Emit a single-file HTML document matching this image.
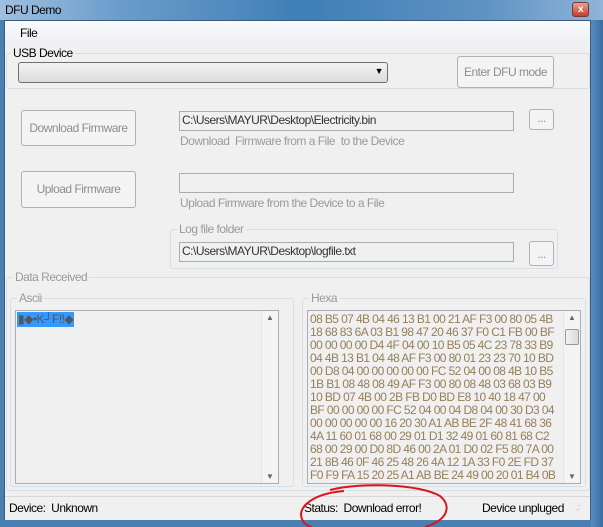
<!DOCTYPE html>
<html><head><style>
*{margin:0;padding:0;box-sizing:border-box}
body{width:603px;height:527px;position:relative;overflow:hidden;font-family:"Liberation Sans",sans-serif;font-size:12px;letter-spacing:-0.5px;background:#6d9cc8}
.a{position:absolute}
#title{left:0;top:0;width:603px;height:20px;background:linear-gradient(90deg,#9fc0de 0%,#6a9ccb 20%,#3f7fb6 50%,#5e92c3 80%,#8fb4d8 100%)}
#client{left:4px;top:20px;width:587px;height:501px;background:#f0f0f0;border:1px solid #3c5b7c}
.gb{position:absolute;border:1px solid #d5dfe5;border-radius:3px}
.gl{position:absolute;background:#f0f0f0;padding:0 2px;color:#9a9a9a;font-size:12px;top:-8px;left:6px}
.btn{position:absolute;border:1px solid #adb2b5;border-radius:3px;background:#f4f4f4;color:#8d8d8d;text-align:center}
.tb{position:absolute;border:1px solid #abadb3;background:#f0f0f0;color:#333;padding-left:2px;line-height:17px}
.lab{position:absolute;color:#9a9a9a}
</style></head><body>
<div id="title" class="a"><span class="a" style="left:5px;top:3px;color:#000">DFU Demo</span>
<div class="a" style="left:572px;top:2px;width:17px;height:15px;background:linear-gradient(#e8a090,#c2402a);border:1px solid #7a3a30;border-radius:3px;color:#fff;font-size:10px;text-align:center;line-height:13px;font-weight:bold">x</div></div>
<div class="a" style="left:0;top:20px;width:4px;height:507px;background:#4a7fb2"></div>
<div id="client" class="a"></div>
<div class="a" style="left:5px;top:21px;width:585px;height:23px;background:linear-gradient(#f9fafc,#eef0f4)"></div>
<span class="a" style="left:20px;top:26px;color:#000">File</span>
<div class="gb" style="left:6px;top:53px;width:584px;height:36px"><span class="gl" style="left:4px;color:#000">USB Device</span></div>
<div class="a" style="left:18px;top:62px;width:370px;height:21px;border:1px solid #707070;border-radius:3px;background:linear-gradient(#f2f2f2,#dcdcdc)"><span class="a" style="right:4px;top:3px;font-size:9px">▼</span></div>
<div class="btn" style="left:457px;top:56px;width:97px;height:32px;line-height:30px">Enter DFU mode</div>
<div class="btn" style="left:21px;top:110px;width:115px;height:36px;line-height:34px">Download Firmware</div>
<div class="tb" style="left:179px;top:111px;width:335px;height:20px">C:\Users\MAYUR\Desktop\Electricity.bin</div>
<div class="btn" style="left:529px;top:109px;width:25px;height:21px;line-height:17px">...</div>
<span class="lab" style="left:180px;top:134px">Download&nbsp; Firmware from a File&nbsp; to the Device</span>
<div class="btn" style="left:21px;top:171px;width:115px;height:37px;line-height:35px">Upload Firmware</div>
<div class="tb" style="left:179px;top:173px;width:335px;height:20px"></div>
<span class="lab" style="left:180px;top:196px">Upload Firmware from the Device to a File</span>
<div class="gb" style="left:170px;top:229px;width:388px;height:40px"><span class="gl">Log file folder</span></div>
<div class="tb" style="left:179px;top:242px;width:335px;height:20px">C:\Users\MAYUR\Desktop\logfile.txt</div>
<div class="btn" style="left:529px;top:241px;width:25px;height:25px;line-height:25px">...</div>
<div class="gb" style="left:6px;top:277px;width:584px;height:214px"><span class="gl">Data Received</span></div>
<div class="gb" style="left:10px;top:298px;width:284px;height:189px;background:#f0f0f0"><span class="gl">Ascii</span></div>
<div class="a" style="left:15px;top:310px;width:264px;height:174px;border:1px solid #abadb3;background:#f0f0f0">
<span class="a" style="left:1px;top:1px;background:#3399ff;color:#555;font-size:12px;line-height:15px;padding:0 1px">▮◆•K┘F‼◆</span>
<div class="a" style="right:0;top:0;width:17px;height:172px;background:#f4f4f4;border-left:1px solid #e6e6e6"><span class="a" style="left:4px;top:2px;font-size:8px;color:#666">▲</span><span class="a" style="left:4px;bottom:2px;font-size:8px;color:#666">▼</span></div></div>
<div class="gb" style="left:302px;top:298px;width:284px;height:189px;background:#f0f0f0"><span class="gl">Hexa</span></div>
<div class="a" style="left:307px;top:310px;width:274px;height:174px;border:1px solid #abadb3;background:#f0f0f0;overflow:hidden">
<div class="a" style="left:2px;top:2px;width:252px;color:#96805a;line-height:13px;font-size:12px;letter-spacing:-0.6px;white-space:pre">08 B5 07 4B 04 46 13 B1 00 21 AF F3 00 80 05 4B
18 68 83 6A 03 B1 98 47 20 46 37 F0 C1 FB 00 BF
00 00 00 00 D4 4F 04 00 10 B5 05 4C 23 78 33 B9
04 4B 13 B1 04 48 AF F3 00 80 01 23 23 70 10 BD
00 D8 04 00 00 00 00 00 FC 52 04 00 08 4B 10 B5
1B B1 08 48 08 49 AF F3 00 80 08 48 03 68 03 B9
10 BD 07 4B 00 2B FB D0 BD E8 10 40 18 47 00
BF 00 00 00 00 FC 52 04 00 04 D8 04 00 30 D3 04
00 00 00 00 00 16 20 30 A1 AB BE 2F 48 41 68 36
4A 11 60 01 68 00 29 01 D1 32 49 01 60 81 68 C2
68 00 29 00 D0 8D 46 00 2A 01 D0 02 F5 80 7A 00
21 8B 46 0F 46 25 48 26 4A 12 1A 33 F0 2E FD 37
F0 F9 FA 15 20 25 A1 AB BE 24 49 00 20 01 B4 0B</div>
<div class="a" style="right:0;top:0;width:17px;height:172px;background:#f4f4f4;border-left:1px solid #e6e6e6"><span class="a" style="left:4px;top:2px;font-size:8px;color:#666">▲</span><div class="a" style="left:1px;top:18px;width:14px;height:16px;border:1px solid #999;border-radius:2px;background:linear-gradient(90deg,#f2f2f2,#dcdcdc)"></div><span class="a" style="left:4px;bottom:2px;font-size:8px;color:#666">▼</span></div></div>
<div class="a" style="left:5px;top:496px;width:585px;height:24px;background:#f0f0f0;border-top:1px solid #d8d8d8"></div>
<span class="a" style="left:9px;top:501px;color:#000">Device:&nbsp; Unknown</span>
<span class="a" style="left:304px;top:501px;color:#000">Status:&nbsp; Download error!</span>
<span class="a" style="left:482px;top:501px;color:#000">Device unpluged</span>
<span class="a" style="left:576px;top:502px;color:#aaa;font-size:9px">.:</span>
<div class="a" style="left:4px;top:520px;width:599px;height:7px;background:#4a7fb2"></div>
<div class="a" style="left:591px;top:20px;width:12px;height:507px;background:linear-gradient(90deg,#5a8cbd,#3a6ea3)"></div>
<svg class="a" style="left:0;top:0" width="603" height="527"><path d="M330 490 C360 482 420 484 440 496 C452 506 448 520 425 527 M344 491 C318 493 302 503 301 514 C301 521 306 526 312 527" fill="none" stroke="#e0121a" stroke-width="2"/></svg>
</body></html>
